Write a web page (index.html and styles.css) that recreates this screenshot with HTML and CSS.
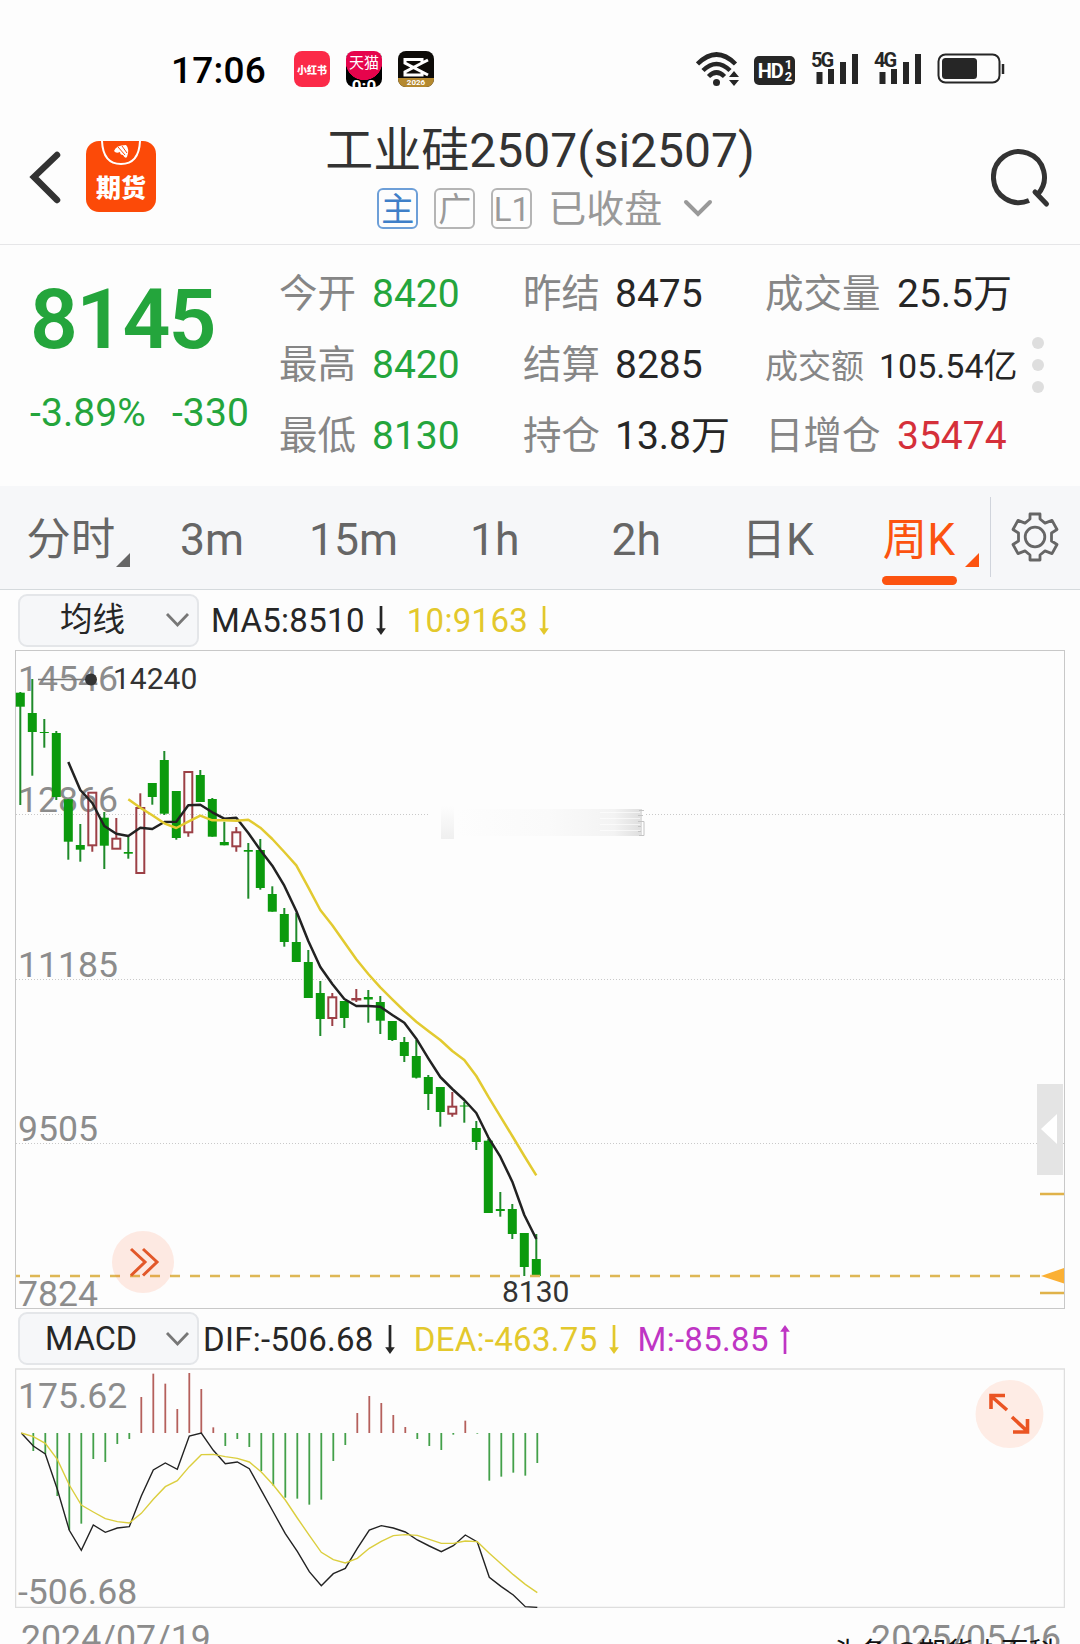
FILE: index.html
```html
<!DOCTYPE html>
<html lang="zh-CN">
<head>
  <meta charset="UTF-8" />
  <meta name="viewport" content="width=device-width, initial-scale=1.0" />
  <title>工业硅2507(si2507)</title>
  <link rel="stylesheet" href="styles.css">
</head>
<body>
  <div class="status-bar">
    <span class="clock">17:06</span>
    <div class="notices">
      <span class="notice xhs">小红书</span>
      <span class="notice tmall"><b>天猫</b><i>0:0</i></span>
      <span class="notice capcut">
        <svg width="36" height="27" viewBox="0 0 36 27"><path d="M30 9 L24 12 L7 21 V24 H24 V21 M30 24 L7 12 V8.500 H24 V12" fill="none" stroke="#fff" stroke-width="3"/></svg>
        <i>2026</i>
      </span>
    </div>
    <div class="signals">
      <svg class="wifi" width="46" height="36" viewBox="0 0 46 36">
        <g fill="none" stroke="#262626" stroke-width="4.500">
          <path d="M1.500 13 Q20.500 -6 39.500 13"/>
          <path d="M7 19.500 Q20.500 6.500 34 19.500"/>
          <path d="M12.500 25.500 Q20.500 17.500 28.500 25.500"/>
        </g>
        <circle cx="20.500" cy="31.500" r="3.500" fill="#262626"/>
        <path d="M33 26 L38 20 L43 26 Z M33 29 L38 35 L43 29 Z" fill="#262626"/>
      </svg>
      <span class="hd">HD<span class="sims"><i>1</i><i>2</i></span></span>
      <span class="signal"><b>5G</b>
        <svg width="46" height="34" viewBox="0 0 46 34"><path d="M6.500 20v12M18 17v15M30 10v22M42 2v30" stroke="#262626" stroke-width="6"/></svg>
      </span>
      <span class="signal"><b>4G</b>
        <svg width="46" height="34" viewBox="0 0 46 34"><path d="M6.500 20v12M18 17v15M30 10v22M42 2v30" stroke="#262626" stroke-width="6"/></svg>
      </span>
      <svg class="battery" width="68" height="32" viewBox="0 0 68 32">
        <rect x="1.500" y="1.500" width="61" height="28" rx="7" fill="none" stroke="#262626" stroke-width="2"/>
        <rect x="5" y="5" width="35" height="21" rx="3.500" fill="#262626"/>
        <path d="M66 11v10" stroke="#262626" stroke-width="2.500"/>
      </svg>
    </div>
  </div>

  <header class="nav">
    <div class="nav-left">
      <svg width="32" height="54" viewBox="0 0 32 54"><path d="M28 5 L5 27 L28 50" fill="none" stroke="#333" stroke-width="6.500" stroke-linecap="round"/></svg>
      <span class="app-logo">
        <svg width="40" height="25" viewBox="0 0 40 25">
          <path d="M1 0 Q2 23 20 23 Q38 23 39 0" fill="none" stroke="#fff" stroke-width="2"/>
          <path d="M13 10 Q15 4 25 4 Q29 8 26 16 Q24 18 22 14 Q19 14 19 11 Q15 13 13 10 Z" fill="#fff"/>
          <path d="M17 6 L24 14 M21 5 L26 12" stroke="#fc4a08" stroke-width="1"/>
        </svg>
        <b>期货</b>
      </span>
    </div>
    <div class="nav-title">
      <h1>工业硅2507(si2507)</h1>
      <div class="tags">
        <span class="tag main">主</span>
        <span class="tag">广</span>
        <span class="tag">L1</span>
        <span class="state">已收盘</span>
        <svg width="30" height="20" viewBox="0 0 30 20"><path d="M3 3 L15 15 L27 3" fill="none" stroke="#999" stroke-width="4" stroke-linecap="round"/></svg>
      </div>
    </div>
    <svg class="search" width="60" height="62" viewBox="0 0 60 62">
      <path d="M38 53.500 A25.500 25.500 0 1 1 47 47" fill="none" stroke="#333" stroke-width="5"/>
      <path d="M44 45 L55.500 57" stroke="#333" stroke-width="5" stroke-linecap="round"/>
    </svg>
  </header>

  <section class="quote">
    <div class="last">
      <div class="price">8145</div>
      <div class="change"><span>-3.89%</span><span>-330</span></div>
    </div>
    <dl class="stats">
      <dt>今开</dt><dd class="down">8420</dd>
      <dt>昨结</dt><dd>8475</dd>
      <dt>成交量</dt><dd>25.5万</dd>
      <dt>最高</dt><dd class="down">8420</dd>
      <dt>结算</dt><dd>8285</dd>
      <dt class="small">成交额</dt><dd class="small">105.54亿</dd>
      <dt>最低</dt><dd class="down">8130</dd>
      <dt>持仓</dt><dd>13.8万</dd>
      <dt>日增仓</dt><dd class="up">35474</dd>
    </dl>
    <div class="more"><i></i><i></i><i></i></div>
  </section>

  <nav class="tabs">
    <a class="tab has-menu">分时</a>
    <a class="tab">3m</a>
    <a class="tab">15m</a>
    <a class="tab">1h</a>
    <a class="tab">2h</a>
    <a class="tab">日K</a>
    <a class="tab has-menu active">周K</a>
    <span class="settings">
      <svg width="50" height="50" viewBox="-25 -25 50 50" fill="none" stroke="#666" stroke-width="2.800" stroke-linejoin="round">
        <path d="M-5 -18 V-23 H5 V-18 L10 -13.900 L17 -16.600 L22 -7.500 L16.500 -4 V4 L22 7.500 L17 16.600 L10 13.900 L5 18 V23 H-5 V18 L-10 13.900 L-17 16.600 L-22 7.500 L-16.500 4 V-4 L-22 -7.500 L-17 -16.600 L-10 -13.900 Z"/>
        <circle r="9.800"/>
      </svg>
    </span>
  </nav>

  <div class="indicator ma-row">
    <span class="select"><b>均线</b><svg width="25" height="16" viewBox="0 0 25 16"><path d="M2 2 L12.500 13 L23 2" fill="none" stroke="#777" stroke-width="2.800"/></svg></span>
    <span class="val">MA5:8510<svg class="arrow" viewBox="0 0 10 30"><path d="M5 0v24"/><path d="M0 23h10l-5 7z"/></svg></span>
    <span class="val yellow">10:9163<svg class="arrow" viewBox="0 0 10 30"><path d="M5 0v24"/><path d="M0 23h10l-5 7z"/></svg></span>
  </div>

  <svg class="chart" id="kline" width="1050" height="659" viewBox="15 650 1050 659">
    <defs>
      <linearGradient id="smudge">
        <stop offset="0" stop-color="#fdfdfd"/>
        <stop offset="0.500" stop-color="#fafafa"/>
        <stop offset="0.850" stop-color="#f3f3f3"/>
        <stop offset="1" stop-color="#dedede"/>
      </linearGradient>
      <linearGradient id="smudge-start" x1="0" y1="0" x2="0" y2="1">
        <stop offset="0" stop-color="#fdfdfd"/>
        <stop offset="1" stop-color="#efefef"/>
      </linearGradient>
    </defs>
    <rect class="frame" x="15.500" y="650.500" width="1049" height="658"/>
    <path class="grid" d="M16 814.500H1064M16 979.500H1064M16 1143.500H1064"/>
    <rect x="430" y="806" width="216" height="34" fill="#fdfdfd"/>
    <rect x="455" y="809" width="187" height="27" fill="url(#smudge)"/>
    <rect x="441" y="806" width="13" height="33" fill="url(#smudge-start)"/>
    <path d="M600 812.500h40M600 818.500h40M600 824.500h40M600 830.500h40" stroke="#fff" stroke-opacity="0.600"/>
    <path d="M639 810.500h5M638 815.500h5M638 821.500h6v14h-5M638 826.500h3M638 831.500h3" fill="none" stroke="#c4c4c4"/>
    <g class="axis">
      <text x="18" y="691">14546</text>
      <text x="18" y="812">12866</text>
      <text x="18" y="977">11185</text>
      <text x="18" y="1141">9505</text>
      <text x="18" y="1306">7824</text>
    </g>
    <g id="candles"></g>
    <path class="last-line" d="M16 1276H1042"/>
    <polyline class="ma5" id="ma5"/>
    <polyline class="ma10" id="ma10"/>
    <path d="M38 679.500H91" stroke="#777" stroke-width="1.500"/>
    <circle cx="91" cy="679.500" r="6" fill="#333"/>
    <text class="mark" x="113" y="689">14240</text>
    <text class="mark" x="502" y="1302">8130</text>
    <circle cx="143" cy="1262" r="31" fill="#fc5a1e" fill-opacity="0.120"/>
    <path d="M131 1249 L145 1262 L131 1275.500 M143 1249 L157 1262 L143 1275.500" fill="none" stroke="#e2582a" stroke-width="3"/>
    <rect x="1037" y="1084" width="26" height="91" fill="#e4e4e4"/>
    <path d="M1041 1129 L1057 1114 V1144 Z" fill="#fff"/>
    <path d="M1040 1194H1064M1040 1293H1064" stroke="#e0b24a" stroke-width="2.500"/>
    <path d="M1041 1276 L1064 1268 V1283.500 Z" fill="#fbb034"/>
  </svg>

  <div class="indicator macd-row">
    <span class="select"><b>MACD</b><svg width="25" height="16" viewBox="0 0 25 16"><path d="M2 2 L12.500 13 L23 2" fill="none" stroke="#777" stroke-width="2.800"/></svg></span>
    <span class="val">DIF:-506.68<svg class="arrow" viewBox="0 0 10 30"><path d="M5 0v24"/><path d="M0 23h10l-5 7z"/></svg></span>
    <span class="val yellow">DEA:-463.75<svg class="arrow" viewBox="0 0 10 30"><path d="M5 0v24"/><path d="M0 23h10l-5 7z"/></svg></span>
    <span class="val purple">M:-85.85<svg class="arrow" viewBox="0 0 10 30"><path d="M5 6v24"/><path d="M0 7h10l-5 -7z"/></svg></span>
  </div>

  <svg class="chart" id="macd" width="1050" height="240" viewBox="15 1368 1050 240">
    <rect class="frame light" x="15.500" y="1369" width="1049" height="238.500"/>
    <g class="axis">
      <text x="18" y="1408">175.62</text>
      <text x="18" y="1604">-506.68</text>
    </g>
    <g id="bars"></g>
    <polyline class="dif" id="dif"/>
    <polyline class="dea" id="dea"/>
    <circle cx="1009.500" cy="1414" r="34" fill="#feece5"/>
    <path d="M1007 1410 L991 1396 M991 1409 V1395.500 H1005 M1012 1417 L1027 1431 M1013 1432 H1027.500 V1419" fill="none" stroke="#ea5423" stroke-width="3.600"/>
  </svg>

  <div class="dates">
    <span>2024/07/19</span>
    <span>2025/05/16<em>头条 @期货小百科</em></span>
  </div>

  <script>
    const NS = "http://www.w3.org/2000/svg";
    const STEP = 12;

    // [up, high, top, bottom, low]
    const candles = [
      [0, 692, 692.7, 706.7, 805], [0, 679, 713, 732, 775.7], [0, 719, 732, 733, 747.7],
      [0, 731, 733, 797, 800], [0, 799, 799.3, 841.7, 859.7], [0, 824, 845, 849.7, 861.7],
      [1, 792, 792.7, 845.3, 851.7], [0, 812, 817.7, 845.7, 869], [1, 818, 838.7, 848.7, 849],
      [0, 836.7, 852, 853.7, 858.7], [1, 793.3, 808, 873, 873], [0, 783, 783, 797, 804.7],
      [0, 751, 760, 813.7, 815], [0, 791, 791, 838, 839.7], [1, 771, 772, 832.3, 836.7],
      [0, 770, 775, 802, 802], [0, 798, 799, 836.7, 836.7], [0, 821.7, 842, 845.3, 845.3],
      [1, 827, 832.3, 846.3, 851.7], [0, 843, 850, 851.7, 898.7], [0, 839, 850, 888, 889.7],
      [0, 886.3, 894, 911.7, 911.7], [0, 908, 914, 942, 946.7], [0, 913, 942, 962, 962],
      [0, 950, 962, 998, 998], [0, 981, 993, 1019, 1036], [1, 993, 997.3, 1018, 1026],
      [0, 1001, 1001, 1018, 1028], [1, 989, 999, 999.5, 1002], [0, 990, 997, 999.5, 1022.7],
      [0, 996, 1002, 1020.7, 1034], [0, 1021, 1021, 1040, 1041], [0, 1037, 1042, 1056, 1062],
      [0, 1040, 1056, 1077.7, 1078.5], [0, 1075, 1077, 1094, 1110], [0, 1087, 1087, 1112, 1126.7],
      [1, 1092, 1106.7, 1113.7, 1116.7], [0, 1101.7, 1105.5, 1106.5, 1122.7], [0, 1121, 1128, 1142, 1150],
      [0, 1139, 1140.7, 1213, 1213], [0, 1192, 1209, 1211, 1216.7], [0, 1204, 1209, 1234, 1239],
      [0, 1233, 1233, 1267, 1276], [0, 1234, 1259, 1276, 1276]
    ];
    const ma5 = [762, 790, 803, 826, 833.7, 836, 827.7, 829, 822, 821.7, 805.3, 804.7, 812.3, 818.7, 817.7, 833,
      850, 865.7, 885.7, 911, 941, 967, 984, 999, 1006, 1006, 1006.7, 1015, 1022.7, 1038.7, 1058.3, 1077,
      1089, 1100, 1113, 1137.3, 1156.7, 1181.7, 1215, 1239];
    const ma10 = [799.3, 807.7, 815.3, 823.3, 828, 821.7, 815.7, 820.3, 820.3, 820.7, 819.7, 827.7, 839, 852,
      865.3, 887.3, 910, 925.3, 942.3, 959.3, 974, 987.3, 999.3, 1011, 1021.7, 1031, 1040, 1051, 1060, 1076,
      1096.7, 1116.3, 1136, 1156, 1175.3];

    const hist = [0, -54, -63, -189, -291, -272, -78, -87, -33, -18, 108, 178, 148, 72, 180, 132, 17, -39, -18,
      -42, -114, -158, -194, -197, -215, -200, -84, -36, 60, 111, 90, 54, 18, -18, -39, -51, -5, 37, -2,
      -143, -131, -119, -128, -90];
    const dif = [0, -39, -63, -169, -292, -352, -276, -298, -285, -281, -189, -111, -90, -109, -9, 0, -52, -92,
      -87, -107, -172, -237, -302, -355, -416, -458, -422, -406, -346, -291, -278, -285, -297, -321, -339,
      -356, -338, -306, -327, -433, -461, -486, -521, -523];
    const dea = [0, -11, -31, -79, -156, -216, -237, -257, -266, -270, -241, -199, -161, -143, -101, -65, -64,
      -71, -76, -87, -117, -156, -201, -255, -307, -358, -380, -390, -376, -346, -325, -308, -305, -307,
      -319, -331, -331, -324, -326, -361, -393, -425, -454, -479];

    function add(parent, tag, attrs) {
      const el = document.createElementNS(NS, tag);
      for (const k in attrs) el.setAttribute(k, attrs[k]);
      parent.appendChild(el);
    }

    function line(id, data, x0, toY) {
      const pts = data.map((v, i) => `${x0 + i * STEP},${toY(v)}`);
      document.getElementById(id).setAttribute("points", pts.join(" "));
    }

    const candleBox = document.getElementById("candles");
    candles.forEach(([up, high, top, bottom, low], i) => {
      const x = 20.3 + i * STEP;
      const cls = up ? "rise" : "fall";
      if (up) {
        add(candleBox, "path", { class: cls, d: `M${x} ${high}V${top}M${x} ${bottom}V${low}` });
        add(candleBox, "rect", { class: cls, x: x - 4, y: top, width: 8, height: bottom - top });
      } else {
        add(candleBox, "path", { class: cls, d: `M${x} ${high}V${low}` });
        add(candleBox, "rect", { class: cls, x: x - 4.5, y: top, width: 9, height: bottom - top });
      }
    });
    line("ma5", ma5, 68.3, v => v);
    line("ma10", ma10, 128.3, v => v);

    const macdY = v => 1433 - v / 3;
    const barBox = document.getElementById("bars");
    hist.forEach((v, i) => {
      add(barBox, "path", { class: v > 0 ? "bar-up" : "bar-down", d: `M${21.3 + i * STEP} 1433V${macdY(v)}` });
    });
    line("dif", dif, 21.3, macdY);
    line("dea", dea, 21.3, macdY);
  </script>
</body>
</html>
```
FILE: styles.css
```css
:root {
  --green: #24a53c;
  --orange: #fc5310;
  --yellow: #e3c82c;
}

* {
  box-sizing: border-box;
}

body {
  margin: 0;
  width: 1080px;
  height: 1644px;
  overflow: hidden;
  background: #fdfdfd;
  color: #262626;
  font-family: Roboto, "Noto Sans CJK SC", sans-serif;
}

svg {
  display: block;
  flex: none;
}

i, em {
  font-style: normal;
}

/* status bar */
.status-bar {
  display: flex;
  align-items: center;
  height: 138px;
  padding: 0 75px 0 171px;
}

.clock {
  width: 123px;
  padding-top: 2px;
  color: #000;
  font-size: 37px;
  font-weight: 500;
  letter-spacing: 0.2px;
}

.notices {
  display: flex;
  gap: 16px;
}

.notice {
  display: flex;
  flex-direction: column;
  align-items: center;
  width: 36px;
  height: 36px;
  border-radius: 8px;
  overflow: hidden;
  color: #fff;
}

.xhs {
  justify-content: center;
  background: #fb2a48;
  font-size: 10px;
  font-weight: 900;
}

.tmall {
  background: radial-gradient(circle at 50% 30%, #e6044c 18px, #000 18.5px);
}

.tmall b {
  font-size: 15px;
  font-weight: 400;
  line-height: 25px;
}

.tmall i {
  font-size: 17px;
  font-weight: 700;
  line-height: 20px;
}

.capcut {
  background: #0d0b08;
}

.capcut i {
  width: 36px;
  background: #b5892f;
  font-size: 8px;
  font-weight: 700;
  line-height: 9px;
  text-align: center;
}

.signals {
  display: flex;
  align-items: center;
  margin-left: auto;
}

.hd {
  display: flex;
  align-items: center;
  justify-content: center;
  width: 41px;
  height: 29px;
  margin: 3px 18px 0 12px;
  border-radius: 5px;
  background: #262626;
  color: #fff;
  font-size: 20px;
  font-weight: 700;
  letter-spacing: -1px;
}

.sims {
  display: flex;
  flex-direction: column;
  margin-left: 2px;
  font-size: 13px;
  line-height: 12px;
}

.signal {
  position: relative;
  margin-right: 17px;
}

.signal b {
  position: absolute;
  left: -2px;
  top: -2px;
  font-size: 20px;
  line-height: 20px;
  letter-spacing: -2px;
  text-shadow: 0 0 2px #fff, 0 1px 0 #fff;
}

.signal + .signal {
  margin-right: 15px;
}

/* title bar */
.nav {
  display: flex;
  justify-content: space-between;
  height: 128px;
  margin-top: -21px;
  padding: 0 29px;
  border-bottom: 1px solid #e6e6e8;
}

.nav-left {
  display: flex;
  align-items: center;
  gap: 25px;
  width: 140px;
  margin-top: -8px;
}

.app-logo {
  display: flex;
  flex-direction: column;
  align-items: center;
  width: 70px;
  height: 71px;
  border-radius: 13px;
  background: #fc4a08;
}

.app-logo b {
  color: #fff;
  font-size: 25px;
  font-weight: 900;
  line-height: 45px;
}

.nav-title {
  text-align: center;
}

h1 {
  margin: 6px 0 0;
  color: #333;
  font-size: 48px;
  font-weight: 400;
  line-height: 56px;
  white-space: nowrap;
}

.tags {
  display: flex;
  align-items: center;
  height: 41px;
  margin: 9px 0 0 52px;
}

.tag {
  width: 41px;
  height: 41px;
  margin-right: 16px;
  border: 2px solid #b5b5b5;
  border-radius: 6px;
  color: #9a9a9a;
  font-size: 33px;
  line-height: 39px;
}

.tag.main {
  border-color: #6d9fd8;
  color: #3f7fc8;
}

.state {
  margin-right: 21px;
  color: #999;
  font-size: 38px;
  line-height: 40px;
}

.search {
  margin: 30px 0 0 80px;
}

/* quote */
.quote {
  display: flex;
  height: 241px;
  padding-left: 30px;
}

.last {
  width: 249px;
  color: var(--green);
}

.price {
  margin-top: 27px;
  font-size: 84px;
  font-weight: 600;
  line-height: 96px;
  letter-spacing: -1.8px;
}

.change {
  display: flex;
  gap: 26px;
  margin-top: 22px;
  font-size: 39px;
  line-height: 46px;
  letter-spacing: 0.1px;
}

.stats {
  display: grid;
  grid-template-columns: 93px 151px 92px 150px 132px 122px;
  grid-template-rows: repeat(3, 71px);
  align-items: baseline;
  width: 740px;
  margin: 17px 0 0;
  line-height: 64px;
  white-space: nowrap;
}

.stats dt {
  color: #868686;
  font-size: 38.5px;
}

.stats dd {
  margin: 0;
  font-size: 39px;
}

.stats .small {
  font-size: 34px;
}

.stats dt.small {
  font-size: 33px;
}

.stats dd.small {
  margin-left: -18px;
}

.down {
  color: var(--green);
}

.up {
  color: #d5303a;
}

.more {
  display: flex;
  flex-direction: column;
  gap: 10px;
  margin: 92px 0 0 13px;
}

.more i {
  width: 12px;
  height: 12px;
  border-radius: 50%;
  background: #dedede;
}

/* period tabs */
.tabs {
  display: flex;
  height: 104px;
  border-bottom: 1px solid #d5dadd;
  background: #f6f7f9;
}

.tab {
  position: relative;
  width: 141.4px;
  color: #666;
  font-size: 44.5px;
  line-height: 109px;
  text-align: center;
}

.has-menu::after {
  content: "";
  position: absolute;
  right: 11px;
  bottom: 22px;
  border-left: 14px solid transparent;
  border-bottom: 14px solid currentColor;
}

.active {
  color: var(--orange);
}

.active::before {
  content: "";
  position: absolute;
  left: 34px;
  bottom: 4px;
  width: 75px;
  height: 9px;
  border-radius: 5px;
  background: var(--orange);
}

.settings {
  display: flex;
  align-items: center;
  height: 80px;
  margin-top: 11px;
  padding-left: 19px;
  border-left: 1px solid #d0d4dc;
}

/* indicator rows */
.indicator {
  display: flex;
  align-items: center;
  height: 60px;
  padding-left: 18px;
  font-size: 33px;
}

.macd-row {
  height: 59px;
}

.select {
  display: flex;
  align-items: center;
  justify-content: space-between;
  width: 181px;
  height: 53px;
  padding: 0 7px 0 40px;
  border: 2px solid #e4e6e9;
  border-radius: 9px;
  background: #f6f7f9;
}

.select b {
  font-size: 32.5px;
  font-weight: 400;
  line-height: 36px;
}

.val {
  display: flex;
  align-items: center;
  margin: 1px 0 0 12px;
  letter-spacing: 0.3px;
}

.macd-row .select {
  padding-left: 25px;
}

.macd-row .val {
  margin-left: 4px;
  letter-spacing: 0.3px;
}

.arrow {
  width: 10px;
  height: 29px;
  margin-left: 11px;
  fill: currentColor;
  stroke: currentColor;
  stroke-width: 2.8px;
}

.arrow path + path {
  stroke: none;
}

.indicator .yellow {
  margin-left: 21px;
  color: var(--yellow);
}

.macd-row .val.yellow, .macd-row .val.purple {
  margin-left: 19px;
}

.purple {
  color: #bf35c4;
}

/* charts */
.chart {
  margin-left: 15px;
}

.frame {
  fill: none;
  stroke: #c8c8c8;
}

.frame.light {
  stroke: #dedede;
  stroke-width: 1.5px;
}

.grid {
  stroke: #c9c9c9;
  stroke-dasharray: 1 2;
}

.axis {
  fill: #8c8c8c;
  font-size: 35.6px;
}

.mark {
  fill: #333;
  font-size: 30px;
}

.last-line {
  stroke: #deb755;
  stroke-width: 2.6px;
  stroke-dasharray: 10 10;
  stroke-dashoffset: 6;
}

.fall {
  fill: #0b9a0d;
  stroke: none;
}

path.fall {
  stroke: #1f8a2a;
  stroke-width: 2px;
}

.rise {
  fill: none;
  stroke: #9c4046;
  stroke-width: 2px;
}

.ma5, .ma10 {
  fill: none;
  stroke: #222;
  stroke-width: 2.5px;
  stroke-linejoin: round;
}

.ma10 {
  stroke: #e2ca30;
}

.bar-up {
  stroke: #b5605c;
  stroke-width: 1.8px;
}

.bar-down {
  stroke: #43a04a;
  stroke-width: 1.8px;
}

.dif, .dea {
  fill: none;
  stroke: #222;
  stroke-width: 1.4px;
}

.dea {
  stroke: #dbce3e;
}

.dates {
  display: flex;
  justify-content: space-between;
  padding: 9px 19px 0 21px;
  color: #8c8c8c;
  font-size: 35.7px;
}

.dates span {
  position: relative;
}

.dates em {
  position: absolute;
  right: 5px;
  top: 13px;
  color: #111;
  font-size: 27.5px;
  white-space: nowrap;
}
```
